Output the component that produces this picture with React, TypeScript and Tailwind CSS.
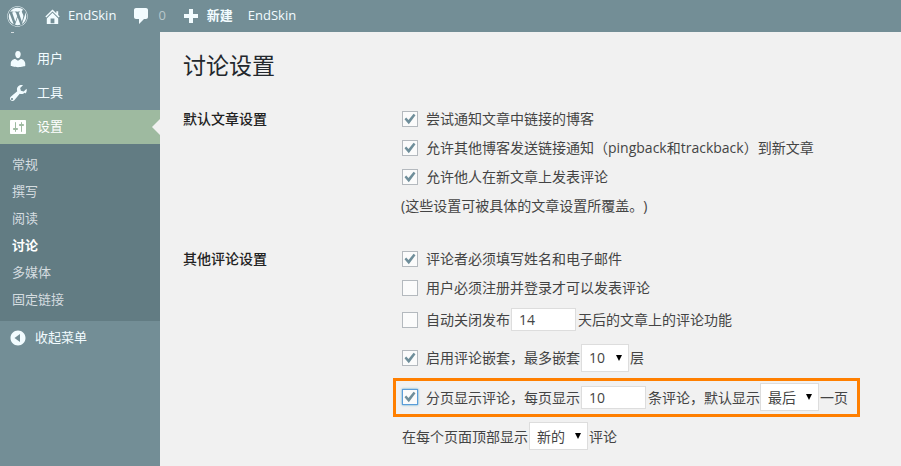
import type { ReactNode } from "react"
import { FaWordpress } from "react-icons/fa"

const font = "font-['Open_Sans','Noto_Sans_CJK_SC',sans-serif]"

function HomeIcon() {
  return (
    <svg viewBox="0 0 20 20" className="h-[19px] w-[19px] fill-current">
      <path d="M16 8.5l1.53 1.53-1.06 1.06L10 4.62l-6.47 6.47-1.06-1.06L10 2.5l4 4v-2h2v4zm-6-2.46l6 5.99V18H4v-5.97zM12 17v-5H8v5h4z" />
    </svg>
  )
}

function CommentIcon() {
  return (
    <svg viewBox="0 0 20 20" className="h-5 w-5 fill-current">
      <path d="M5 2h10c1.1 0 2 .9 2 2v7c0 1.1-.9 2-2 2h-2l-5 5v-5H5c-1.100 0-2-.9-2-2V4c0-1.100.9-2 2-2z" />
    </svg>
  )
}

function PlusIcon() {
  return (
    <svg viewBox="0 0 20 20" className="h-5 w-5 fill-current">
      <path d="M17 8v4h-5v5H8v-5H3V8h5V3h4v5h5z" />
    </svg>
  )
}

function UserIcon() {
  return (
    <svg viewBox="0 0 20 20" className="h-5 w-5 fill-current">
      <path d="M10 9.25c-2.270 0-2.730-3.440-2.730-3.440C7 4.020 7.820 2 9.970 2c2.160 0 2.980 2.020 2.710 3.810 0 0-.410 3.440-2.680 3.440zm0 2.570L12.720 10c2.390 0 4.520 2.330 4.520 4.530v2.490s-3.650 1.130-7.240 1.130c-3.650 0-7.240-1.130-7.240-1.130v-2.490c0-2.250 1.940-4.480 4.470-4.480z" />
    </svg>
  )
}

function WrenchIcon() {
  return (
    <svg viewBox="0 0 20 20" className="h-5 w-5 fill-current">
      <path d="M16.680 9.770c-1.340 1.340-3.300 1.670-4.950.99l-5.410 6.520c-.99.990-2.590.99-3.580 0s-.99-2.590 0-3.580l6.520-5.420c-.68-1.650-.35-3.610.99-4.950 1.280-1.280 3.120-1.640 4.730-1.100l-2.810 2.810.71 2.830 2.830.71 2.810-2.810c.54 1.610.18 3.450-1.100 4.730zM5 16c0-.55-.45-1-1-1s-1 .45-1 1 .45 1 1 1 1-.45 1-1z" />
    </svg>
  )
}

function SettingsIcon() {
  return (
    <svg viewBox="0 0 20 20" className="h-5 w-5 fill-current">
      <path d="M18 16V4c0-.55-.45-1-1-1H3c-.55 0-1 .45-1 1v12c0 .55.45 1 1 1h14c.55 0 1-.45 1-1zM8 11h1c.55 0 1 .45 1 1s-.45 1-1 1H8v1.500c0 .28-.22.5-.5.5s-.5-.22-.5-.5V13H6c-.55 0-1-.45-1-1s.45-1 1-1h1V5.500c0-.28.22-.5.5-.5s.5.220.5.500V11zm5-2h-1c-.55 0-1-.45-1-1s.45-1 1-1h1V5.500c0-.28.22-.5.5-.5s.5.220.5.500V7h1c.55 0 1 .45 1 1s-.45 1-1 1h-1v5.500c0 .28-.22.5-.5.5s-.5-.22-.5-.5V9z" />
    </svg>
  )
}

function CollapseIcon() {
  return (
    <svg viewBox="0 0 20 20" className="h-5 w-5 fill-current">
      <path d="M10 2.500c-4.140 0-7.500 3.360-7.500 7.500s3.360 7.500 7.500 7.500 7.500-3.360 7.500-7.500-3.360-7.500-7.500-7.500zm2 3.500v8L6.500 10 12 6z" />
    </svg>
  )
}

function Checkbox({ checked, focused }: { checked?: boolean; focused?: boolean }) {
  return (
    <span
      className={`flex h-4 w-4 shrink-0 items-center justify-center border bg-[#fbfbfb] ${
        focused ? "border-[#5b9dd9] shadow-[0_0_2px_rgba(30,140,190,0.8)]" : "border-[#b4b9be]"
      }`}
    >
      {checked && (
        <svg viewBox="0 0 16 16" className="h-[16px] w-[16px] shrink-0 fill-[#6f8e9a]">
          <path d="M2.500 8.200l1.700-1.700 2.300 2.400L11.600 2.800 13.500 4.200 6.800 13.200z" />
        </svg>
      )}
    </span>
  )
}

function NumberBox({ value }: { value: string }) {
  return (
    <span className="ml-[1px] mr-[2px] flex h-[23px] w-[65px] items-center border border-[#ddd] bg-white pl-[7px] text-[14px]">
      {value}
    </span>
  )
}

function SelectBox({ value, width, margin }: { value: string; width: string; margin: string }) {
  return (
    <span className={`mr-[1px] flex h-[28px] items-center justify-between border border-[#ddd] bg-white pl-[7px] pr-[6px] ${margin} ${width}`}>
      {value}
      <svg viewBox="0 0 6 6" className="h-[6px] w-[6px] fill-black">
        <path d="M0 0h6L3 6z" />
      </svg>
    </span>
  )
}

function Row({ className, children }: { className: string; children: ReactNode }) {
  return <div className={`flex items-center ${className}`}>{children}</div>
}

const submenu = ["常规", "撰写", "阅读", "讨论", "多媒体", "固定链接"]

export default function App() {
  return (
    <div className={`flex h-[466px] w-[901px] flex-col overflow-hidden bg-[#f1f1f1] text-[14px] text-[#444] [text-spacing-trim:space-all] ${font}`}>
      <header className="flex h-8 shrink-0 items-center bg-[#738e96] text-[13px] text-[#f2fcff]">
        <FaWordpress className="ml-[7px] h-[21px] w-[21px]" />
        <span className="ml-[15px]"><HomeIcon /></span>
        <span className="ml-[6px]">EndSkin</span>
        <span className="ml-[15px]"><CommentIcon /></span>
        <span className="ml-[7px] text-[#b8c7cb]">0</span>
        <span className="ml-[15px]"><PlusIcon /></span>
        <span className="ml-[6px] font-semibold">新建</span>
        <span className="ml-[15px]">EndSkin</span>
      </header>

      <div className="flex min-h-0 flex-1">
        <aside className="w-40 shrink-0 bg-[#738e96] text-[13px] text-[#f2fcff]">
          <div className="ml-[11px] h-px w-[3px] bg-[#d5dde0]" />
          <div className="mt-[9px] flex h-[34px] items-center pl-[8px]">
            <UserIcon />
            <span className="ml-[9px]">用户</span>
          </div>
          <div className="flex h-[34px] items-center pl-[8px]">
            <WrenchIcon />
            <span className="ml-[9px]">工具</span>
          </div>
          <div className="relative flex h-[34px] items-center bg-[#9ebaa0] pl-[8px] text-white">
            <SettingsIcon />
            <span className="ml-[9px]">设置</span>
            <span className="absolute right-0 top-[9px] h-0 w-0 border-y-[8px] border-r-[8px] border-y-transparent border-r-[#f1f1f1]" />
          </div>
          <ul className="bg-[#627c83] pb-[8px] pl-[12px] pt-[7px] text-[#d5dde0]">
            {submenu.map((item) => (
              <li key={item} className={`flex h-[27px] items-center ${item === "讨论" ? "font-semibold text-white" : ""}`}>
                {item}
              </li>
            ))}
          </ul>
          <div className="flex h-[34px] items-center pl-[8px]">
            <CollapseIcon />
            <span className="ml-[7px]">收起菜单</span>
          </div>
        </aside>

        <main className="min-w-0 flex-1 pl-[23px]">
          <h1 className="mt-[17px] text-[23px] leading-[32px] text-[#23282d]">讨论设置</h1>

          <div className="mt-[23px] flex">
            <div className="w-[218px] shrink-0 pt-[4px] text-[14px] font-medium leading-[22px] text-[#222]">默认文章设置</div>
            <div className="flex flex-col">
              <Row className="h-[29px] gap-[8px] pl-[1px]"><Checkbox checked />尝试通知文章中链接的博客</Row>
              <Row className="h-[29px] gap-[8px] pl-[1px]"><Checkbox checked />允许其他博客发送链接通知（pingback和trackback）到新文章</Row>
              <Row className="h-[29px] gap-[8px] pl-[1px]"><Checkbox checked />允许他人在新文章上发表评论</Row>
              <Row className="h-[29px]">(这些设置可被具体的文章设置所覆盖。)</Row>
            </div>
          </div>

          <div className="mt-[24px] flex">
            <div className="w-[218px] shrink-0 pt-[4px] text-[14px] font-medium leading-[22px] text-[#222]">其他评论设置</div>
            <div className="flex flex-col">
              <Row className="h-[29px] gap-[8px] pl-[1px]"><Checkbox checked />评论者必须填写姓名和电子邮件</Row>
              <Row className="h-[29px] gap-[8px] pl-[1px]"><Checkbox />用户必须注册并登录才可以发表评论</Row>
              <Row className="h-[35px] pl-[1px]">
                <Checkbox />
                <span className="ml-[8px]">自动关闭发布</span>
                <NumberBox value="14" />
                <span>天后的文章上的评论功能</span>
              </Row>
              <Row className="h-[41px] pl-[1px]">
                <Checkbox checked />
                <span className="ml-[8px]">启用评论嵌套，最多嵌套</span>
                <SelectBox value="10" width="w-[48px]" margin="ml-[1px]" />
                <span>层</span>
              </Row>
              <div className="relative">
                <Row className="h-[38px] pl-[1px]">
                  <Checkbox checked focused />
                  <span className="ml-[8px]">分页显示评论，每页显示</span>
                  <NumberBox value="10" />
                  <span>条评论，默认显示</span>
                  <SelectBox value="最后" width="w-[59px]" margin="ml-0" />
                  <span>一页</span>
                </Row>
                <span className="absolute -left-[8px] top-0 h-[39px] w-[467px] border-[3px] border-[#ff7f00]" />
              </div>
              <Row className="mt-[1px] h-[38px] pl-[1px]">
                <span>在每个页面顶部显示</span>
                <SelectBox value="新的" width="w-[59px]" margin="ml-[1px]" />
                <span>评论</span>
              </Row>
            </div>
          </div>
        </main>
      </div>
    </div>
  )
}
